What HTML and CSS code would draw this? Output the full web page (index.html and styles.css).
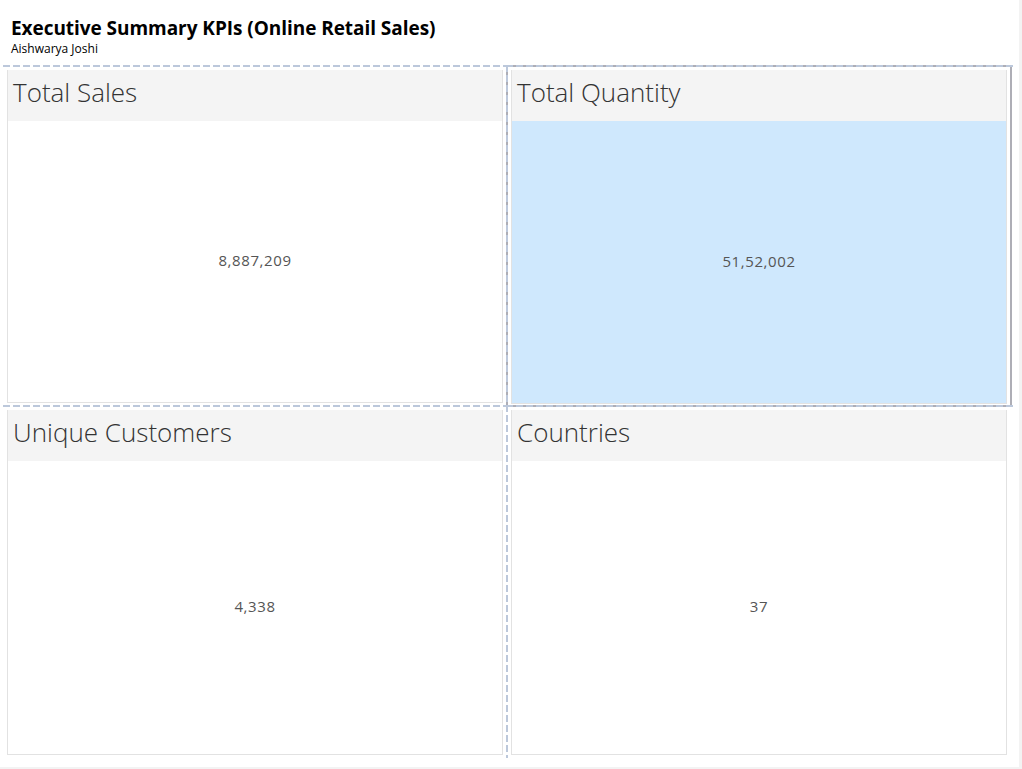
FILE: index.html
```html
<!DOCTYPE html>
<html>
<head>
<meta charset="utf-8">
<link rel="stylesheet" href="styles.css">
</head>
<body>
<div class="page">
  <header class="head">
    <h1 class="title">Executive Summary KPIs (Online Retail Sales)</h1>
    <div class="subtitle">Aishwarya Joshi</div>
  </header>
  <div class="board">
    <div class="cell cell-l cell-top">
      <div class="panel">
        <div class="panel-head">Total Sales</div>
        <div class="panel-body">8,887,209</div>
      </div>
    </div>
    <div class="cell cell-r cell-top selected">
      <div class="panel">
        <div class="panel-head">Total Quantity</div>
        <div class="panel-body hl">51,52,002</div>
      </div>
    </div>
    <div class="cell cell-l cell-bot">
      <div class="panel">
        <div class="panel-head">Unique Customers</div>
        <div class="panel-body">4,338</div>
      </div>
    </div>
    <div class="cell cell-r cell-bot">
      <div class="panel">
        <div class="panel-head">Countries</div>
        <div class="panel-body">37</div>
      </div>
    </div>
  </div>
</div>
</body>
</html>
```
FILE: styles.css
```css
html { background: #f3f3f3; }
body { margin: 0; }
.page {
  width: 1019px;
  height: 767px;
  background: #fff;
  font-family: "Open Sans", "Liberation Sans", sans-serif;
}
.head { padding: 16px 0 0 11px; height: 65px; box-sizing: border-box; }
.title {
  margin: 0;
  font-size: 19px;
  font-weight: 700;
  line-height: 24px;
  color: #000;
  letter-spacing: -0.05px;
}
.subtitle { font-size: 12px; line-height: 14px; color: #000; margin-top: 2px; }
.board {
  margin-left: 3px;
  display: grid;
  grid-template-columns: 503px 506px;
  grid-template-rows: 340px 353px;
}
.cell { position: relative; display: flex; }
.cell::before {
  content: "";
  position: absolute;
  left: 0; right: -2px; top: 0; height: 2px;
  background: repeating-linear-gradient(90deg, #bcc8db 0 7px, transparent 7px 10px);
  z-index: 2;
}
.cell-r::before { right: -3px; }
.cell-r::after {
  content: "";
  position: absolute;
  left: 0; top: 0; bottom: 0; width: 2px;
  background: repeating-linear-gradient(180deg, #bcc8db 0 7px, transparent 7px 10px);
  z-index: 2;
}
.cell-l { padding: 5px 3px 2px 4px; }
.cell-r { padding: 5px 5px 2px 5px; }
.cell-bot { padding-bottom: 3px; }
.selected { box-shadow: inset 0 0 0 2px #aeaeb6; padding: 5px 5px 3px 5px; margin-bottom: -2px; z-index: 1; }
.panel {
  flex: 1;
  display: flex;
  flex-direction: column;
  border: 1px solid #e2e2e2;
  border-top: 0;
  background: #fff;
}
.panel-head {
  height: 51px;
  background: #f4f4f4;
  font-weight: 300;
  font-size: 26px;
  line-height: 45px;
  padding-left: 5px;
  color: #333;
}
.panel-body {
  flex: 1;
  display: flex;
  align-items: center;
  justify-content: center;
  font-size: 15px;
  letter-spacing: 0.6px;
  color: #555;
  padding-bottom: 3px;
}
.hl { background: #cfe8fd; }
```
